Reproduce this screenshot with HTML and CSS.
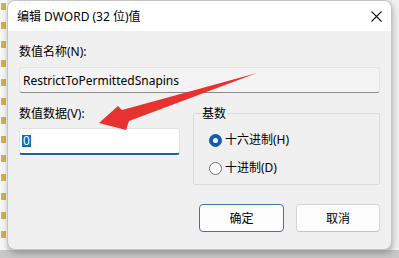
FILE: index.html
```html
<!DOCTYPE html>
<html lang="zh-CN">
<head>
<meta charset="utf-8">
<title>编辑 DWORD (32 位)值</title>
<link rel="stylesheet" href="styles.css">
</head>
<body>
<div class="screen">
  <div class="top">
    <div class="tree"></div>
    <div class="dialog">
      <div class="titlebar">
        <span class="title">编辑 DWORD (32 位)值</span>
        <svg class="close" width="11" height="11" viewBox="0 0 11 11"><path d="M0.5 0.5 L10.5 10.5 M10.5 0.5 L0.5 10.5" stroke="#1a1a1a" stroke-width="1.1" fill="none"/></svg>
      </div>
      <div class="body">
        <div class="label">数值名称(N):</div>
        <div class="field readonly">RestrictToPermittedSnapins</div>
        <div class="row">
          <div class="col-data">
            <div class="label">数值数据(V):</div>
            <div class="field edit"><span class="sel">0</span></div>
          </div>
          <div class="group">
            <div class="group-title">基数</div>
            <div class="radio"><span class="dot on"></span>十六进制(H)</div>
            <div class="radio"><span class="dot"></span>十进制(D)</div>
          </div>
        </div>
        <div class="buttons">
          <button class="btn primary">确定</button>
          <button class="btn">取消</button>
        </div>
      </div>
    </div>
    <div class="side"></div>
  </div>
  <div class="bottom"></div>
  <svg class="arrow" width="399" height="258" viewBox="0 0 399 258">
    <polygon points="99,123 118,106 122,110 257,73 129,121 126,130" fill="#e8322f"/>
  </svg>
</div>
</body>
</html>
```
FILE: styles.css
```css
html, body {
  margin: 0;
  padding: 0;
}
body {
  width: 399px;
  height: 258px;
  overflow: hidden;
  font-family: "Segoe UI", "Noto Sans", "Noto Sans CJK SC", sans-serif;
  font-size: 12px;
  color: #000;
}
.screen {
  position: relative;
  width: 399px;
  height: 258px;
  display: flex;
  flex-direction: column;
  background: #ececec;
}
.top {
  display: flex;
  height: 250px;
}
.tree {
  width: 7px;
  background:
    linear-gradient(90deg, #f7f7f7 0 1px, transparent 1px 6px, #f7f7f7 6px),
    repeating-linear-gradient(180deg, #f7f7f7 0 3px, #d6b04c 3px 10px, #f7f7f7 10px 19px);
}
.dialog {
  position: relative;
  z-index: 1;
  width: 385px;
  box-sizing: border-box;
  border: 1px solid #c4c4c4;
  border-radius: 8px;
  background: #f0f0f0;
  overflow: hidden;
  box-shadow: 1px 3px 7px rgba(0, 0, 0, 0.28);
  display: flex;
  flex-direction: column;
}
.side {
  flex: 1;
  background: #f3f3f3;
}
.bottom {
  height: 8px;
  background: #c8c8c8;
}
.titlebar {
  height: 30px;
  background: #ffffff;
  display: flex;
  align-items: center;
  justify-content: space-between;
  padding: 0 9px;
  line-height: 16px;
}
.title {
  padding-top: 1px;
}
.body {
  display: flex;
  flex-direction: column;
  padding: 13px 11px 17px 11px;
}
.label {
  line-height: 16px;
  height: 16px;
}
.body > .label {
  margin-bottom: 7px;
}
.field {
  box-sizing: border-box;
  display: flex;
  align-items: center;
  border-radius: 3px;
}
.readonly {
  height: 26px;
  background: #f3f3f3;
  border: 1px solid #e3e3e3;
  border-bottom-color: #8a8a8a;
  padding-left: 3px;
  padding-top: 1px;
}
.row {
  display: flex;
  gap: 13px;
  margin-top: 13px;
}
.col-data {
  width: 161px;
  display: flex;
  flex-direction: column;
}
.col-data .label {
  margin-bottom: 6px;
}
.edit {
  height: 27px;
  background: #ffffff;
  border: 1px solid #e2e2e2;
  border-bottom: 2px solid #22618f;
  padding-left: 2px;
}
.sel {
  background: #0a6fc2;
  color: #fff;
  line-height: 12px;
  height: 12px;
  padding: 0 1px;
}
.group {
  flex: 1;
  margin-top: 7px;
  border: 1px solid #dadada;
  border-radius: 2px;
  display: flex;
  flex-direction: column;
  padding: 0 0 6px 15px;
  gap: 8px;
}
.group-title {
  align-self: flex-start;
  margin: -8px 0 0 -8px;
  padding: 0 1px;
  background: #f0f0f0;
  line-height: 16px;
  height: 16px;
}
.radio {
  height: 20px;
  display: flex;
  align-items: center;
  line-height: 16px;
}
.dot {
  box-sizing: border-box;
  width: 13px;
  height: 13px;
  border-radius: 50%;
  border: 1px solid #707070;
  background: #fbfbfb;
  margin-right: 3px;
  display: flex;
  align-items: center;
  justify-content: center;
}
.dot.on {
  background: #145ea8;
  border-color: #145ea8;
}
.dot.on::after {
  content: "";
  width: 5px;
  height: 5px;
  border-radius: 50%;
  background: #ffffff;
}
.buttons {
  display: flex;
  justify-content: flex-end;
  gap: 12px;
  margin-top: 19px;
}
.btn {
  box-sizing: border-box;
  height: 28px;
  width: 84px;
  border: 1px solid #d4d4d4;
  border-bottom-color: #c4c4c4;
  border-radius: 4px;
  background: #fdfdfd;
  font-family: inherit;
  font-size: 12px;
  color: #000;
  padding: 0;
}
.btn.primary {
  width: 85px;
  border: 1px solid #3d76a6;
}
.arrow {
  position: absolute;
  left: 0;
  top: 0;
  z-index: 5;
  pointer-events: none;
}
```
